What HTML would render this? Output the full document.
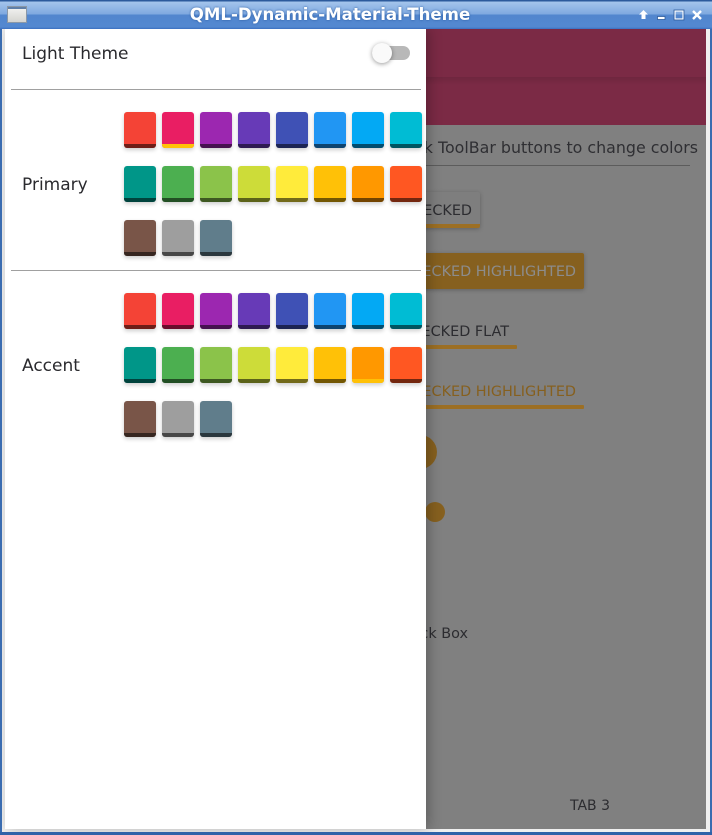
<!DOCTYPE html>
<html><head><meta charset="utf-8">
<style>
html,body{margin:0;padding:0;width:712px;height:835px;overflow:hidden;background:#fff;font-family:"DejaVu Sans","Liberation Sans",sans-serif}
.a{position:absolute}
#frame{position:absolute;left:0;top:0;width:712px;height:835px;background:#efefef}
#edgeL{left:0;top:0;width:2px;height:835px;background:#3a6cb0}
#edgeR{left:710px;top:0;width:2px;height:835px;background:#3a6cb0}
#edgeB{left:0;top:832px;width:712px;height:3px;background:#2f62a8}
#title{left:0;top:0;width:712px;height:29px;background:linear-gradient(#2c5a9c 0,#2c5a9c 1px,#a3c4ec 2px,#7fa9e0 14px,#5286ce 15px,#5388d0 27px,#3a6fc0 29px)}
#title span{position:absolute;left:0;top:6px;width:660px;text-align:center;color:#fff;font-weight:bold;font-size:16.6px;line-height:18px;text-shadow:0 0 2px #2a5a9e}
#content{left:5px;top:29px;width:701px;height:800px;background:#808080;overflow:hidden}
#bar{left:0;top:0;width:701px;height:96px;background:#7b2a45}
#drawer{left:5px;top:29px;width:421px;height:800px;background:#fff;box-shadow:3px 0 12px rgba(0,0,0,.25)}
.sw{position:absolute;width:32px;height:36px;border-radius:3px;box-shadow:0 2px 4px rgba(0,0,0,.2);overflow:hidden}
.sw i{position:absolute;left:0;bottom:0;width:32px;height:4px;background:rgba(0,0,0,.55)}
.sw i.y{background:#ffc107}
.lb{position:absolute;font-size:17px;line-height:20px;color:#2a2a2e;white-space:nowrap}
.hr{position:absolute;left:11px;width:410px;height:1px;background:#a0a0a0}
.t{position:absolute;white-space:nowrap;font-size:14.4px;line-height:18px;color:#2c2c30}
</style></head><body>
<div id="frame"></div>
<div class="a" id="content">
  <div class="a" id="bar"></div>
  <div class="a" style="left:0;top:48px;width:701px;height:8px;background:linear-gradient(rgba(0,0,0,.1),rgba(0,0,0,0))"></div>
  <div class="t" style="right:8px;top:109px;font-size:15.85px;line-height:20px;color:#2f2f33">Click ToolBar buttons to change colors</div>
  <div class="a" style="left:416px;top:136px;width:269px;height:1px;background:#5c5c5c"></div>

  <div class="a" style="left:380px;top:163px;width:95px;height:36px;border-radius:2px;background:#7e7e7e;box-shadow:0 1px 4px rgba(0,0,0,.25);overflow:hidden"><div class="a" style="left:0;bottom:0;width:95px;height:4px;background:#9c6f24"></div></div>
  <div class="t" style="right:234px;top:173px">CHECKED</div>

  <div class="a" style="left:380px;top:224px;width:199px;height:36px;border-radius:2px;background:#86601f;box-shadow:0 1px 4px rgba(0,0,0,.25)"></div>
  <div class="t" style="right:130px;top:234px;color:#8c8c8c">CHECKED HIGHLIGHTED</div>

  <div class="t" style="right:197px;top:294px">CHECKED FLAT</div>
  <div class="a" style="left:380px;top:316px;width:132px;height:4px;border-radius:0 1px 1px 0;background:#9c6f24"></div>

  <div class="t" style="right:130px;top:354px;color:#86601f">CHECKED HIGHLIGHTED</div>
  <div class="a" style="left:380px;top:376px;width:199px;height:4px;border-radius:0 1px 1px 0;background:#9c6f24"></div>

  <div class="a" style="left:384px;top:406px;width:48px;height:34px;border-radius:17px;background:#86601f"></div>
  <div class="a" style="left:420px;top:473px;width:20px;height:20px;border-radius:10px;background:#86601f"></div>
  <div class="t" style="right:238px;top:596px">Check Box</div>
  <div class="t" style="left:565px;top:768px;font-size:14px">TAB 3</div>
</div>
<div class="a" id="drawer"></div>
<div class="a" id="edgeL"></div><div class="a" id="edgeR"></div><div class="a" id="edgeB"></div>
<div class="a" id="title"><span>QML-Dynamic-Material-Theme</span>
  <div class="a" style="left:7px;top:6px;width:20px;height:17px;box-sizing:border-box;border:1px solid #8a98a8;background:linear-gradient(#f4f4f2,#d4d4d0)"><div style="height:2px;background:#5f7fa8"></div></div>
  <svg class="a" style="left:636px;top:8px" width="70" height="16" viewBox="0 0 70 16" fill="none">
    <path d="M7.5 2 L12 6.5 H9.5 V11 H5.5 V6.5 H3 Z" fill="#fff"/>
    <rect x="21.5" y="8.5" width="7.5" height="3" fill="#fff" stroke="#2f5c9c" stroke-width=".8"/>
    <rect x="39" y="3" width="8" height="8" stroke="#fff" stroke-width="1.2"/>
    <rect x="38" y="2" width="10" height="10" stroke="#2f5c9c" stroke-width=".8"/>
    <path d="M57 3 L65 11 M65 3 L57 11" stroke="#fff" stroke-width="2.4"/>
  </svg>
</div>

<div class="lb" style="left:22px;top:44px">Light Theme</div>
<div class="a" style="left:372px;top:46px;width:38px;height:14px;border-radius:7px;background:#b8b8b8"></div>
<div class="a" style="left:372px;top:43px;width:20px;height:20px;border-radius:10px;background:#fafafa;box-shadow:0 1px 5px rgba(0,0,0,.4)"></div>
<div class="hr" style="top:89px"></div>
<div class="lb" style="left:22px;top:175px">Primary</div>
<div class="hr" style="top:270px"></div>
<div class="lb" style="left:22px;top:356px">Accent</div>

<div class="sw" style="left:124px;top:112px;background:#f44336"><i></i></div>
<div class="sw" style="left:162px;top:112px;background:#e91e63"><i class="y"></i></div>
<div class="sw" style="left:200px;top:112px;background:#9c27b0"><i></i></div>
<div class="sw" style="left:238px;top:112px;background:#673ab7"><i></i></div>
<div class="sw" style="left:276px;top:112px;background:#3f51b5"><i></i></div>
<div class="sw" style="left:314px;top:112px;background:#2196f3"><i></i></div>
<div class="sw" style="left:352px;top:112px;background:#03a9f4"><i></i></div>
<div class="sw" style="left:390px;top:112px;background:#00bcd4"><i></i></div>
<div class="sw" style="left:124px;top:166px;background:#009688"><i></i></div>
<div class="sw" style="left:162px;top:166px;background:#4caf50"><i></i></div>
<div class="sw" style="left:200px;top:166px;background:#8bc34a"><i></i></div>
<div class="sw" style="left:238px;top:166px;background:#cddc39"><i></i></div>
<div class="sw" style="left:276px;top:166px;background:#ffeb3b"><i></i></div>
<div class="sw" style="left:314px;top:166px;background:#ffc107"><i></i></div>
<div class="sw" style="left:352px;top:166px;background:#ff9800"><i></i></div>
<div class="sw" style="left:390px;top:166px;background:#ff5722"><i></i></div>
<div class="sw" style="left:124px;top:220px;background:#795548"><i></i></div>
<div class="sw" style="left:162px;top:220px;background:#9e9e9e"><i></i></div>
<div class="sw" style="left:200px;top:220px;background:#607d8b"><i></i></div>

<div class="sw" style="left:124px;top:293px;background:#f44336"><i></i></div>
<div class="sw" style="left:162px;top:293px;background:#e91e63"><i></i></div>
<div class="sw" style="left:200px;top:293px;background:#9c27b0"><i></i></div>
<div class="sw" style="left:238px;top:293px;background:#673ab7"><i></i></div>
<div class="sw" style="left:276px;top:293px;background:#3f51b5"><i></i></div>
<div class="sw" style="left:314px;top:293px;background:#2196f3"><i></i></div>
<div class="sw" style="left:352px;top:293px;background:#03a9f4"><i></i></div>
<div class="sw" style="left:390px;top:293px;background:#00bcd4"><i></i></div>
<div class="sw" style="left:124px;top:347px;background:#009688"><i></i></div>
<div class="sw" style="left:162px;top:347px;background:#4caf50"><i></i></div>
<div class="sw" style="left:200px;top:347px;background:#8bc34a"><i></i></div>
<div class="sw" style="left:238px;top:347px;background:#cddc39"><i></i></div>
<div class="sw" style="left:276px;top:347px;background:#ffeb3b"><i></i></div>
<div class="sw" style="left:314px;top:347px;background:#ffc107"><i></i></div>
<div class="sw" style="left:352px;top:347px;background:#ff9800"><i class="y"></i></div>
<div class="sw" style="left:390px;top:347px;background:#ff5722"><i></i></div>
<div class="sw" style="left:124px;top:401px;background:#795548"><i></i></div>
<div class="sw" style="left:162px;top:401px;background:#9e9e9e"><i></i></div>
<div class="sw" style="left:200px;top:401px;background:#607d8b"><i></i></div>
</body></html>
